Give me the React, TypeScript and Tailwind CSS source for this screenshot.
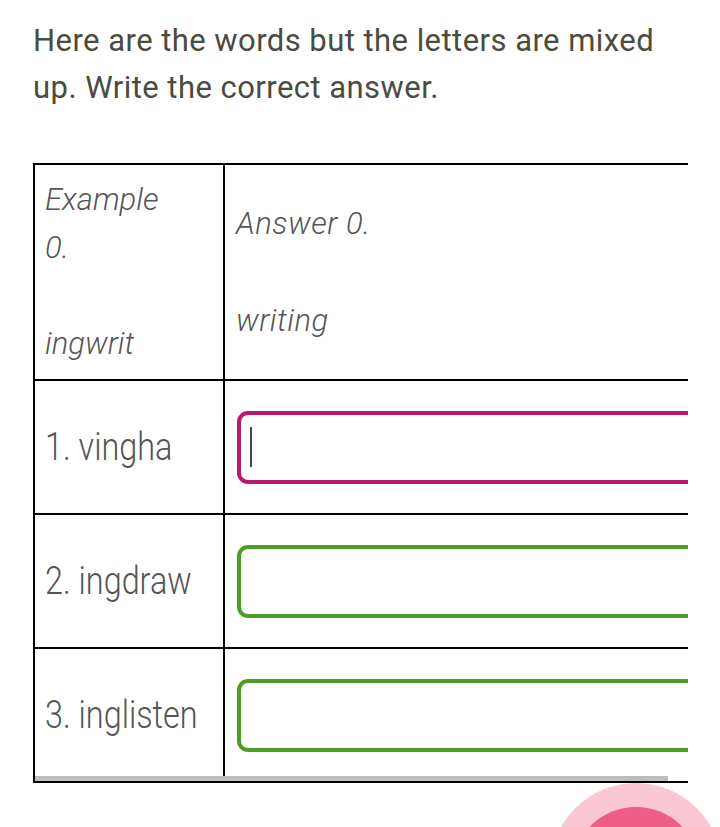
import React from "react";

const font = { fontFamily: "Roboto, 'Noto Sans', sans-serif" };

function InputBox({ color, caret }: { color: string; caret?: boolean }) {
  return (
    <div
      className={`ml-[12px] h-[73px] w-[490px] shrink-0 rounded-[11px] border-[4px] ${color} flex items-center pl-[9px]`}
    >
      {caret ? <div className="h-[40px] w-[2px] bg-[#444]" /> : null}
    </div>
  );
}

export default function App() {
  const rows = [
    { label: "1. vingha", color: "border-[#b8196f]", caret: true },
    { label: "2. ingdraw", color: "border-[#4f9c25]" },
    { label: "3. inglisten", color: "border-[#4f9c25]" },
  ];
  return (
    <div className="relative w-[720px] h-[827px] overflow-hidden bg-white" style={font}>
      <div className="pl-[33px] pt-[17px] text-[31px] leading-[47px] tracking-[0.45px] text-[#4b4b3f]">
        <p>
          <span className="block">Here are the words but the letters are mixed</span>
          <span className="block">up. Write the correct answer.</span>
        </p>
      </div>

      <div className="relative ml-[33px] mt-[52px] w-[655px] overflow-hidden">
        <div className="grid w-[720px] grid-cols-[190px_530px] border-l-2 border-t-2 border-black text-[#555]">
          <div className="flex h-[216px] flex-col justify-center border-b-2 border-r-2 border-black pl-[10px] text-[31px] font-light italic leading-[48px]">
            <span>Example</span>
            <span>0.</span>
            <span className="h-[48px]" />
            <span>ingwrit</span>
          </div>
          <div className="flex h-[216px] flex-col justify-center border-b-2 border-r-2 border-black pl-[11px] text-[31px] font-light italic leading-[48px] tracking-[0.5px]">
            <span>Answer 0.</span>
            <span className="h-[49px]" />
            <span>writing</span>
          </div>
          {rows.map((r) => (
            <React.Fragment key={r.label}>
              <div className="flex h-[134px] items-center overflow-hidden border-b-2 border-r-2 border-black pl-[10px] text-[39px] font-light">
                <span className="inline-block origin-left scale-x-[0.83] whitespace-nowrap">{r.label}</span>
              </div>
              <div className="flex h-[134px] items-center border-b-2 border-r-2 border-black">
                <InputBox color={r.color} caret={r.caret} />
              </div>
            </React.Fragment>
          ))}
        </div>
        <div className="absolute bottom-[2px] left-[2px] h-[5px] w-[633px] bg-[#bdbdbd]" />
      </div>

      <div className="absolute left-[550px] top-[783px] flex h-[172px] w-[172px] items-center justify-center rounded-full bg-[#f9c6d4]">
        <div className="mt-[4px] h-[128px] w-[128px] rounded-full bg-[#ee5d88]" />
      </div>
    </div>
  );
}
